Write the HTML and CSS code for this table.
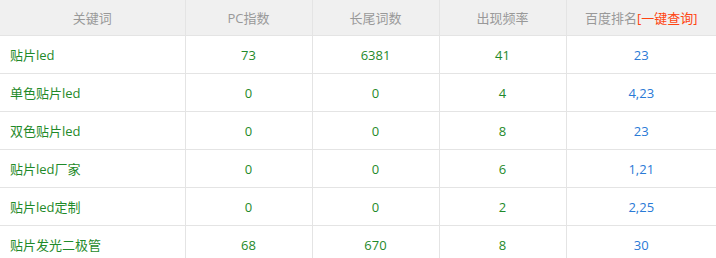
FILE: index.html
```html
<!DOCTYPE html>
<html lang="zh">
<head>
<meta charset="utf-8">
<link rel="stylesheet" href="styles.css">
</head>
<body>
<table class="kw-table">
  <colgroup>
    <col class="c1"><col class="c2"><col class="c3"><col class="c4"><col class="c5">
  </colgroup>
  <thead>
    <tr>
      <th>关键词</th>
      <th>PC指数</th>
      <th>长尾词数</th>
      <th>出现频率</th>
      <th>百度排名<a class="query">[一键查询]</a></th>
    </tr>
  </thead>
  <tbody>
    <tr><td class="kw">贴片led</td><td>73</td><td>6381</td><td>41</td><td class="rank">23</td></tr>
    <tr><td class="kw">单色贴片led</td><td>0</td><td>0</td><td>4</td><td class="rank">4,23</td></tr>
    <tr><td class="kw">双色贴片led</td><td>0</td><td>0</td><td>8</td><td class="rank">23</td></tr>
    <tr><td class="kw">贴片led厂家</td><td>0</td><td>0</td><td>6</td><td class="rank">1,21</td></tr>
    <tr><td class="kw">贴片led定制</td><td>0</td><td>0</td><td>2</td><td class="rank">2,25</td></tr>
    <tr><td class="kw">贴片发光二极管</td><td>68</td><td>670</td><td>8</td><td class="rank">30</td></tr>
  </tbody>
</table>
</body>
</html>
```

FILE: styles.css
```css
html, body {
  margin: 0;
  padding: 0;
  background: #ffffff;
}
.kw-table {
  width: 716px;
  border-collapse: collapse;
  table-layout: fixed;
  font-family: "Open Sans", "Noto Sans CJK SC", sans-serif;
  font-size: 13px;
}
.c1 { width: 185px; }
.c2 { width: 127px; }
.c3 { width: 127px; }
.c4 { width: 127px; }
.c5 { width: 150px; }
.kw-table th {
  height: 35px;
  padding: 0;
  background: #f0f0f0;
  color: #999999;
  font-weight: normal;
  text-align: center;
  border-bottom: 1px solid #e4e4e4;
  border-right: 1px solid #e4e4e4;
}
.kw-table td {
  height: 37px;
  padding: 0;
  color: #1f8a2a;
  text-align: center;
  border-bottom: 1px solid #e4e4e4;
  border-right: 1px solid #e4e4e4;
}
.kw-table th:last-child,
.kw-table td:last-child {
  border-right: none;
}
.kw-table td.kw {
  text-align: left;
  padding-left: 10px;
}
.kw-table td.rank {
  color: #2a7ad6;
}
.query {
  color: #ff4411;
  text-decoration: none;
}
```
